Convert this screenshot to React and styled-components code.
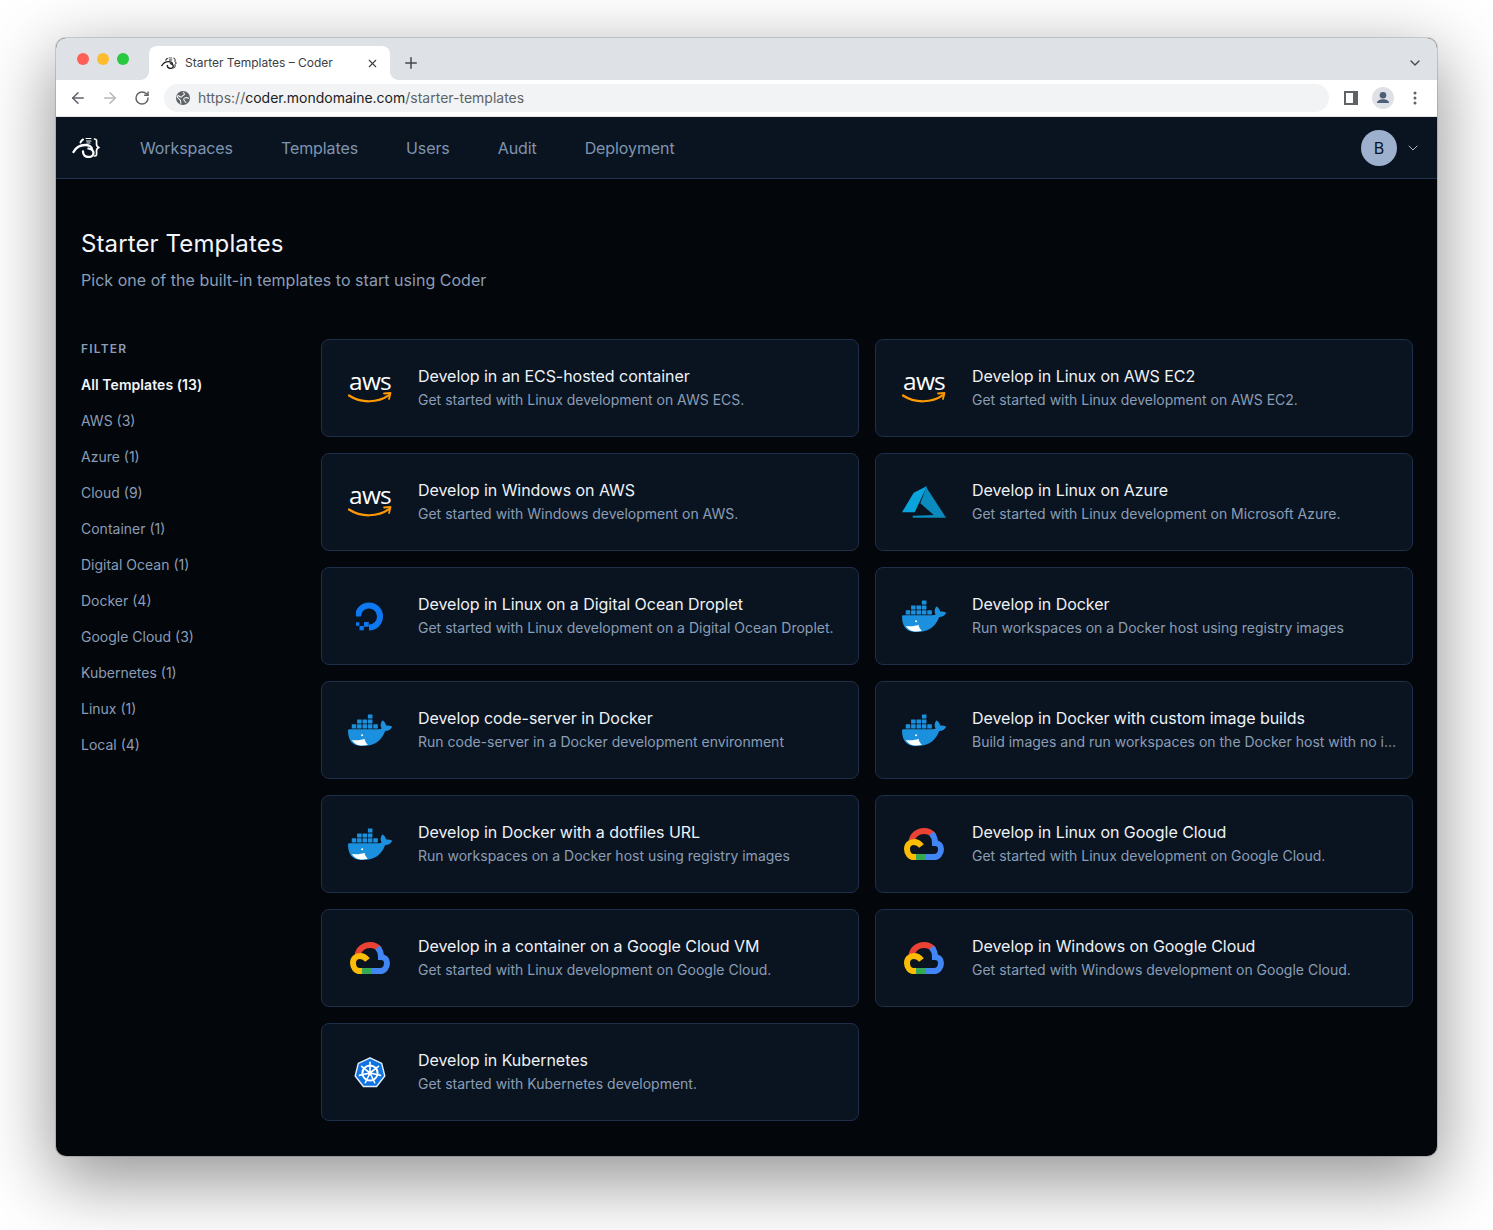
import React from "react";
import styled, { createGlobalStyle } from "styled-components";
import { ArrowLeft, ArrowRight, RotateCw, Plus, X, ChevronDown } from "lucide-react";

const Global = createGlobalStyle`
  html, body { margin: 0; padding: 0; background: #fff; }
  body { font-family: "Inter", "Liberation Sans", sans-serif; height: 1230px; overflow: hidden; -webkit-font-smoothing: antialiased; }
  * { box-sizing: border-box; }
`;

const Win = styled.div`
  margin: 38px 56px 0;
  width: 1381px;
  height: 1118px;
  border-radius: 10px;
  overflow: hidden;
  background: #03060b;
  box-shadow: 0 0 0 1px rgba(0,0,0,.14), 0 22px 70px 4px rgba(0,0,0,.42);
  display: flex;
  flex-direction: column;
`;
const TabStrip = styled.div`
  height: 42px;
  background: #dee1e6;
  display: flex;
  align-items: flex-end;
  padding-left: 21px;
  padding-right: 14px;
  flex: none;
`;
const Lights = styled.div`
  display: flex;
  gap: 8px;
  width: 72px;
  align-self: flex-start;
  padding-top: 15px;
`;
const Light = styled.span`
  width: 12px;
  height: 12px;
  border-radius: 50%;
  background: ${p => p.$c};
`;
const Tab = styled.div`
  position: relative;
  width: 241px;
  height: 34px;
  background: #fff;
  border-radius: 8px 8px 0 0;
  display: flex;
  align-items: center;
  padding: 0 11px 0 12px;
  font-size: 12px;
  color: #3c4043;
  &::before, &::after {
    content: "";
    position: absolute;
    bottom: 0;
    width: 8px;
    height: 8px;
  }
  &::before { left: -8px; background: radial-gradient(circle at 0 0, #dee1e6 7.5px, #fff 8px); }
  &::after { right: -8px; background: radial-gradient(circle at 100% 0, #dee1e6 7.5px, #fff 8px); }
`;
const TabTitle = styled.span`
  flex: 1;
  margin-left: 8px;
  padding-bottom: 2px;
  white-space: nowrap;
`;
const NewTab = styled.div`
  margin: 0 0 7px 11px;
  width: 20px;
  height: 20px;
  display: flex;
  align-items: center;
  justify-content: center;
  color: #45494e;
`;
const Spacer = styled.div`flex: 1;`;
const StripEnd = styled.div`
  align-self: center;
  display: flex;
  margin-top: 8px;
  color: #45494e;
`;
const Toolbar = styled.div`
  height: 37px;
  background: #fff;
  display: flex;
  align-items: center;
  padding: 0 20px 1px 12px;
  flex: none;
  border-bottom: 1px solid #e3e5e8;
`;
const ToolBtn = styled.div`
  width: 20px;
  height: 20px;
  display: flex;
  align-items: center;
  justify-content: center;
  color: ${p => p.$off ? "#b4b7ba" : "#5f6368"};
  margin-right: ${p => p.$mr || 0}px;
`;
const Omni = styled.div`
  width: 1165px;
  height: 28px;
  border-radius: 14px;
  background: #f1f3f4;
  margin-left: 12px;
  display: flex;
  align-items: center;
  padding-left: 12px;
  gap: 8px;
  font-size: 14px;
  color: #5f6368;
  flex: none;
`;
const Host = styled.span`color: #202124;`;
const ToolRight = styled.div`
  flex: 1;
  display: flex;
  align-items: center;
  padding-left: 15px;
`;
const ProfileSlot = styled.div`
  display: flex;
  margin: 0 19px 0 14px;
`;
const Nav = styled.nav`
  height: 62px;
  flex: none;
  background: #0a1420;
  border-bottom: 1px solid #1f3050;
  display: flex;
  align-items: center;
  padding-left: 16px;
  padding-right: 16px;
`;
const NavLinks = styled.div`
  display: flex;
  margin-left: 16px;
`;
const NavLink = styled.a`
  padding: 0 24px;
  font-size: 16px;
  letter-spacing: -.006em;
  color: #7f94b0;
`;
const Avatar = styled.div`
  width: 36px;
  height: 36px;
  border-radius: 50%;
  background: #9db1cf;
  color: #0a1420;
  display: flex;
  align-items: center;
  justify-content: center;
  font-size: 16px;
`;
const AvatarCaret = styled.div`
  display: flex;
  color: #a3b4cd;
  margin-left: 8px;
`;
const Main = styled.main`
  flex: 1;
  padding: 0 24px 0 25px;
  display: flex;
  flex-direction: column;
`;
const Header = styled.header`
  padding-top: 50px;
  height: 160px;
  flex: none;
`;
const Title = styled.h1`
  margin: 0;
  font-size: 24px;
  line-height: 30px;
  font-weight: 400;
  letter-spacing: .005em;
  color: #f2f5f9;
`;
const Sub = styled.p`
  margin: 9px 0 0;
  font-size: 16px;
  line-height: 24px;
  letter-spacing: .002em;
  color: #8b9db6;
`;
const Body = styled.div`
  display: flex;
`;
const Side = styled.aside`
  width: 240px;
  flex: none;
  display: flex;
  flex-direction: column;
`;
const FilterLabel = styled.div`
  font-size: 12px;
  line-height: 20px;
  font-weight: 600;
  letter-spacing: .1em;
  color: #8b9db6;
  margin-bottom: 8px;
`;
const FilterItem = styled.a`
  font-size: 14px;
  line-height: 36px;
  font-weight: ${p => p.$active ? 600 : 400};
  letter-spacing: ${p => p.$active ? ".005em" : "0"};
  color: ${p => p.$active ? "#f2f5f9" : "#8b9db6"};
`;
const Grid = styled.div`
  flex: 1;
  display: grid;
  grid-template-columns: 538px 538px;
  grid-auto-rows: 98px;
  gap: 16px;
`;
const Card = styled.a`
  background: #0a1420;
  border: 1px solid #1e2f49;
  border-radius: 8px;
  display: flex;
  align-items: center;
  padding: 0 14px 0 24px;
  gap: 24px;
  min-width: 0;
`;
const IconBox = styled.div`
  width: 48px;
  flex: none;
  display: flex;
  align-items: center;
  justify-content: center;
`;
const CardText = styled.div`
  min-width: 0;
  flex: 1;
  display: flex;
  flex-direction: column;
  gap: 4px;
`;
const CardTitle = styled.div`
  font-size: 16px;
  line-height: 20px;
  letter-spacing: -.003em;
  color: #eef2f7;
`;
const CardDesc = styled.div`
  font-size: 14px;
  line-height: 20px;
  color: #8b9db6;
  white-space: nowrap;
  overflow: hidden;
  text-overflow: ellipsis;
`;

const CoderLogo = ({ w = 28, c = "#fff" }) => (
  <svg width={w} height={w * 0.75} viewBox="4 5 28 21" fill="none" stroke={c} strokeLinecap="round" strokeLinejoin="round">
    <path d="M5.500 20C8 15.500 12 13 17 13c3.500 0 7 1.500 7 4.500" strokeWidth="2.400" />
    <path d="M15 7.500c-1 .5-2 1.500-2.500 3" strokeWidth="2" />
    <path d="M18 6.500h5M18.500 9h4.500M19 11h3" strokeWidth="1.100" />
    <path d="M15 19.500c0 3.500 2.500 5.500 5.500 5.500s5-1.800 5-4-2-3.800-5-4.500" strokeWidth="2.300" />
    <path d="M26.500 7c2.800 0 2 2.500 2 5 0 1.500.5 3 2.500 3.500-2 .5-2.500 2-2.500 3.500 0 2.500.8 5-2 5" strokeWidth="1.700" />
  </svg>
);
const Globe = () => (
  <svg width="14" height="14" viewBox="0 0 14 14">
    <circle cx="7" cy="7" r="7" fill="#5f6368" />
    <path d="M7 1.200c1 .8 1.800 1.200 1.500 2S6.500 4.500 6 5.500 4 6 3 5 1.600 5 1.300 6c1 1.500 2.500 2.500 3.200 3.500.3 1.500 0 2.500.6 3.200M12.800 7.500c-1-.8-2.200-1-3.500-.8S7.500 8 8 9.200s1.800 1.200 2 2.600" fill="none" stroke="#f1f3f4" strokeWidth="1.100" />
  </svg>
);
const SidePanel = () => (
  <svg width="14" height="14" viewBox="0 0 14 14">
    <rect width="14" height="14" fill="#5f6368" />
    <rect x="2" y="2" width="7" height="10" fill="#fff" />
  </svg>
);
const Profile = () => (
  <svg width="22" height="22" viewBox="0 0 22 22">
    <circle cx="11" cy="11" r="11" fill="#dee1e6" />
    <circle cx="11" cy="8.300" r="3.300" fill="#4d5f78" />
    <path d="M5 16c0-2.600 3-3.700 6-3.700s6 1.100 6 3.700z" fill="#4d5f78" />
  </svg>
);
const Dots = () => (
  <svg width="4" height="14" viewBox="0 0 4 14" fill="#5f6368">
    <circle cx="2" cy="2" r="1.500" /><circle cx="2" cy="7" r="1.500" /><circle cx="2" cy="12" r="1.500" />
  </svg>
);

const AwsText = styled.text`
  font-family: "Open Sans", "Noto Sans", sans-serif;
  font-size: 24.500px;
  font-weight: 500;
  fill: #fff;
  letter-spacing: -.8px;
`;
const Aws = () => (
  <svg width="48" height="64" viewBox="-2 -16 48 64">
    <AwsText x="22" y="18" textAnchor="middle">aws</AwsText>
    <path d="M1 23.500c12 8 29 7.500 40-.3" fill="none" stroke="#f90" strokeWidth="2.200" strokeLinecap="round" />
    <path d="M36 21.500l6.500-.5-1.500 6" fill="none" stroke="#f90" strokeWidth="1.800" strokeLinejoin="round" strokeLinecap="round" />
  </svg>
);
const Azure = () => (
  <svg width="44" height="32" viewBox="0 0 44 32">
    <path d="M0 26.300 11.700 6.700 25 0 12.700 26.300z" fill="#0aa3dc" />
    <path d="M24.300 1.300 44 31.700H10.700V29.700L31.700 29 18.300 17.300z" fill="#0b8bbd" />
  </svg>
);
const DigitalOcean = () => (
  <svg width="29" height="29" viewBox="1.500 0 29 29" fill="#0d78f2">
    <path d="M3.500 14.500A11 11 0 1 1 14.500 25.500" fill="none" stroke="#0d78f2" strokeWidth="6" />
    <rect x="9.500" y="20" width="4.800" height="4.800" />
    <rect x="5" y="24" width="4.300" height="4.300" />
    <rect x="1.500" y="20.300" width="3.300" height="3.500" />
  </svg>
);
const Docker = () => (
  <svg width="44" height="32" viewBox="0 3.200 24 17.400">
    <path fill="#1b90de" d="M13.983 11.078h2.119a.186.186 0 00.186-.185V9.006a.186.186 0 00-.186-.186h-2.119a.185.185 0 00-.185.185v1.888c0 .102.083.185.185.185m-2.954-5.43h2.118a.186.186 0 00.186-.186V3.574a.186.186 0 00-.186-.185h-2.118a.185.185 0 00-.185.185v1.888c0 .102.082.185.185.186m0 2.716h2.118a.187.187 0 00.186-.186V6.29a.186.186 0 00-.186-.185h-2.118a.185.185 0 00-.185.185v1.887c0 .102.082.185.185.186m-2.93 0h2.12a.186.186 0 00.184-.186V6.29a.185.185 0 00-.185-.185H8.1a.185.185 0 00-.185.185v1.887c0 .102.083.185.185.186m-2.964 0h2.119a.186.186 0 00.185-.186V6.29a.185.185 0 00-.185-.185H5.136a.186.186 0 00-.186.185v1.887c0 .102.084.185.186.186m5.893 2.715h2.118a.186.186 0 00.186-.185V9.006a.186.186 0 00-.186-.186h-2.118a.185.185 0 00-.185.185v1.888c0 .102.082.185.185.185m-2.93 0h2.12a.185.185 0 00.184-.185V9.006a.185.185 0 00-.184-.186h-2.12a.185.185 0 00-.184.185v1.888c0 .102.083.185.185.185m-2.964 0h2.119a.185.185 0 00.185-.185V9.006a.185.185 0 00-.184-.186h-2.12a.186.186 0 00-.186.186v1.887c0 .102.084.185.186.185m-2.92 0h2.12a.185.185 0 00.184-.185V9.006a.185.185 0 00-.184-.186h-2.12a.185.185 0 00-.184.186v1.887c0 .102.082.185.185.185M23.763 9.89c-.065-.051-.672-.51-1.954-.51-.338.001-.676.03-1.01.087-.248-1.7-1.653-2.53-1.716-2.566l-.344-.199-.226.327c-.284.438-.49.922-.612 1.43-.23.97-.09 1.882.403 2.661-.595.332-1.55.413-1.744.42H.751a.751.751 0 00-.75.748 11.376 11.376 0 00.692 4.062c.545 1.428 1.355 2.48 2.41 3.124 1.18.723 3.1 1.137 5.275 1.137.983.003 1.963-.086 2.93-.266a12.248 12.248 0 003.823-1.389c.98-.567 1.86-1.288 2.61-2.136 1.252-1.418 1.998-2.997 2.553-4.4h.221c1.372 0 2.215-.549 2.68-1.009.309-.293.55-.65.707-1.046l.098-.288Z" />
    <path fill="#fff" d="M2 17.300c2.500.4 5.200.2 7-.6.200 1 .700 2.200 1.800 3.400-1 .2-2 .2-3 .2-2.400 0-3.900-.6-5.800-3z" />
    <circle cx="7.700" cy="14.700" r=".55" fill="#fff" />
  </svg>
);
const GoogleCloud = () => (
  <svg width="40" height="32" viewBox="0 0 40 32" fill="none" strokeWidth="6">
    <path d="M7.500 14C8 7.500 13.500 3 20 3c4 0 7.300 1.500 9.500 4.500" stroke="#ea4335" />
    <path d="M27.500 5.500C30 8 31 10.500 31 15C34.500 15 37 17.500 37 21C37 25.500 34 29 30 29H20" stroke="#4285f4" />
    <path d="M21 29H11" stroke="#34a853" />
    <path d="M12 29H10C6 29 3 25.500 3 21S6 14 10 14C13 14 15.500 15.500 17.500 18" stroke="#fbbc05" />
  </svg>
);
const spokes = [0, 1, 2, 3, 4, 5, 6].map(i => (-90 + (i * 360) / 7) * Math.PI / 180);
const Kubernetes = () => (
  <svg width="32" height="31" viewBox="0 0 32 31">
    <path d="M16 .8 27.700 6.400 30.800 19 22.600 29.500H9.400L1.200 19 4.300 6.400z" fill="#0f74e0" stroke="#e6eefb" strokeWidth="1.400" strokeLinejoin="round" />
    <g fill="none" stroke="#fff" strokeLinecap="round">
      <circle cx="16" cy="16" r="7.600" strokeWidth="2" />
      <circle cx="16" cy="16" r="2.200" fill="#fff" stroke="none" />
      {spokes.map((a, i) => (
        <line key={i} x1="16" y1="16" x2={16 + 10.800 * Math.cos(a)} y2={16 + 10.800 * Math.sin(a)} strokeWidth="1.600" />
      ))}
    </g>
  </svg>
);

const icons = { aws: Aws, azure: Azure, do: DigitalOcean, docker: Docker, gcp: GoogleCloud, k8s: Kubernetes };
const filters = ["AWS (3)", "Azure (1)", "Cloud (9)", "Container (1)", "Digital Ocean (1)", "Docker (4)", "Google Cloud (3)", "Kubernetes (1)", "Linux (1)", "Local (4)"];
const templates = [
  ["aws", "Develop in an ECS-hosted container", "Get started with Linux development on AWS ECS."],
  ["aws", "Develop in Linux on AWS EC2", "Get started with Linux development on AWS EC2."],
  ["aws", "Develop in Windows on AWS", "Get started with Windows development on AWS."],
  ["azure", "Develop in Linux on Azure", "Get started with Linux development on Microsoft Azure."],
  ["do", "Develop in Linux on a Digital Ocean Droplet", "Get started with Linux development on a Digital Ocean Droplet."],
  ["docker", "Develop in Docker", "Run workspaces on a Docker host using registry images"],
  ["docker", "Develop code-server in Docker", "Run code-server in a Docker development environment"],
  ["docker", "Develop in Docker with custom image builds", "Build images and run workspaces on the Docker host with no image registry required"],
  ["docker", "Develop in Docker with a dotfiles URL", "Run workspaces on a Docker host using registry images"],
  ["gcp", "Develop in Linux on Google Cloud", "Get started with Linux development on Google Cloud."],
  ["gcp", "Develop in a container on a Google Cloud VM", "Get started with Linux development on Google Cloud."],
  ["gcp", "Develop in Windows on Google Cloud", "Get started with Windows development on Google Cloud."],
  ["k8s", "Develop in Kubernetes", "Get started with Kubernetes development."],
];

export default function App() {
  return (
    <>
      <Global />
      <Win>
        <TabStrip>
          <Lights>
            <Light $c="#ff5f57" /><Light $c="#febc2e" /><Light $c="#28c840" />
          </Lights>
          <Tab>
            <CoderLogo w={16} c="#202124" />
            <TabTitle>Starter Templates – Coder</TabTitle>
            <X size={13} strokeWidth={2} color="#3c4043" />
          </Tab>
          <NewTab><Plus size={18} strokeWidth={2} /></NewTab>
          <Spacer />
          <StripEnd><ChevronDown size={16} strokeWidth={2} /></StripEnd>
        </TabStrip>
        <Toolbar>
          <ToolBtn $mr={12}><ArrowLeft size={18} strokeWidth={2} /></ToolBtn>
          <ToolBtn $off $mr={12}><ArrowRight size={18} strokeWidth={2} /></ToolBtn>
          <ToolBtn><RotateCw size={16} strokeWidth={2.2} /></ToolBtn>
          <Omni>
            <Globe />
            <span>https://<Host>coder.mondomaine.com</Host>/starter-templates</span>
          </Omni>
          <ToolRight>
            <SidePanel />
            <ProfileSlot><Profile /></ProfileSlot>
            <Dots />
          </ToolRight>
        </Toolbar>
        <Nav>
          <CoderLogo w={28} />
          <NavLinks>
            {["Workspaces", "Templates", "Users", "Audit", "Deployment"].map(n => <NavLink key={n}>{n}</NavLink>)}
          </NavLinks>
          <Spacer />
          <Avatar>B</Avatar>
          <AvatarCaret><ChevronDown size={16} strokeWidth={1.5} /></AvatarCaret>
        </Nav>
        <Main>
          <Header>
            <Title>Starter Templates</Title>
            <Sub>Pick one of the built-in templates to start using Coder</Sub>
          </Header>
          <Body>
            <Side>
              <FilterLabel>FILTER</FilterLabel>
              <FilterItem $active>All Templates (13)</FilterItem>
              {filters.map(f => <FilterItem key={f}>{f}</FilterItem>)}
            </Side>
            <Grid>
              {templates.map(([icon, title, desc]) => {
                const Icon = icons[icon];
                return (
                  <Card key={title}>
                    <IconBox><Icon /></IconBox>
                    <CardText>
                      <CardTitle>{title}</CardTitle>
                      <CardDesc>{desc}</CardDesc>
                    </CardText>
                  </Card>
                );
              })}
            </Grid>
          </Body>
        </Main>
      </Win>
    </>
  );
}
